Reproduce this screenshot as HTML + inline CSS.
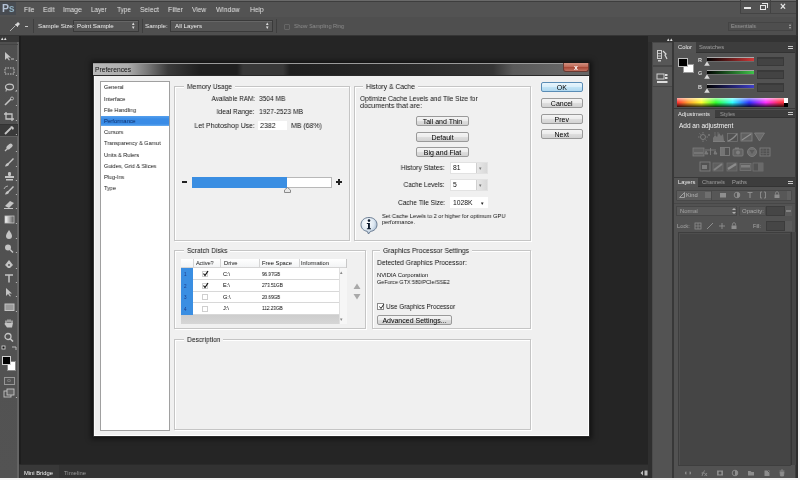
<!DOCTYPE html>
<html><head><meta charset="utf-8">
<style>
*{box-sizing:border-box}
html,body{margin:0;padding:0}
body{width:800px;height:480px;overflow:hidden;position:relative;background:#262626;font-family:"Liberation Sans",sans-serif}
.a{position:absolute}
.t{position:absolute;white-space:nowrap;line-height:1;will-change:transform}
.dk{-webkit-text-stroke:0.15px currentColor}
.mn{color:#dedede;font-size:7px;top:6px}
.dl{color:#1a1a1a;font-size:6.7px}
.grp{position:absolute;border:1px solid #d0d0d0;box-shadow:inset 1px 1px 0 #fff,1px 1px 0 #fff}
.gt{position:absolute;background:#f0f0f0;padding:0 2px;white-space:nowrap;line-height:1;font-size:6.7px;color:#1a1a1a}
.btn{position:absolute;border:1px solid #9a9a9a;border-radius:2px;background:linear-gradient(#f4f4f4,#ececec 50%,#dedede 51%,#d2d2d2);font-size:7px;color:#000;text-align:center;line-height:9px;will-change:transform;white-space:nowrap}
</style></head><body>

<!-- ===== MENU BAR ===== -->
<div class="a" style="left:0;top:0;width:798px;height:17px;background:#535353"></div>
<div class="a" style="left:0;top:0;width:798px;height:1px;background:#6a6a6a"></div>
<div class="a" style="left:0;top:1px;width:798px;height:1px;background:#3e3e3e"></div>
<div class="a" style="left:0;top:2px;width:16px;height:13px;background:#474b51"></div>
<div class="t" style="left:1.5px;top:2.6px;font-size:10.5px;font-weight:bold;color:#b4c2d6;letter-spacing:-0.3px">P<span style="color:#8fb0c2">s</span></div>
<!-- window controls -->
<div class="a" style="left:740px;top:0;width:1px;height:14px;background:#424242"></div>
<div class="a" style="left:770px;top:0;width:1px;height:14px;background:#424242"></div>
<div class="a" style="left:740px;top:13px;width:56px;height:1px;background:#444"></div>
<div class="a" style="left:744px;top:7px;width:7px;height:1.5px;background:#e8e8e8"></div>
<div class="a" style="left:760px;top:5px;width:6px;height:5px;border:1px solid #e8e8e8"></div>
<div class="a" style="left:762px;top:3px;width:6px;height:5px;border:1px solid #e8e8e8;border-left:0;border-bottom:0"></div>
<div class="t" style="left:780px;top:2px;font-size:10px;color:#e8e8e8;font-weight:bold">×</div>

<!-- ===== OPTIONS BAR ===== -->
<div class="a" style="left:0;top:17px;width:798px;height:18px;background:#4f4f4f"></div>
<div class="a" style="left:0;top:35px;width:798px;height:1px;background:#353535"></div>
<div class="a" style="left:25px;top:26px;width:3px;height:1px;background:#c8c8c8"></div>
<div class="a" style="left:33px;top:19px;width:1px;height:14px;background:#3f3f3f"></div>
<div class="a" style="left:73px;top:20px;width:66px;height:12px;background:#555;border:1px solid #3a3a3a;box-shadow:inset 0 1px 0 #666"></div>
<div class="t" style="left:132px;top:21px;font-size:5px;color:#ddd;line-height:4px">▴<br>▾</div>
<div class="a" style="left:142px;top:19px;width:1px;height:14px;background:#3f3f3f"></div>
<div class="a" style="left:170px;top:20px;width:103px;height:12px;background:#555;border:1px solid #3a3a3a;box-shadow:inset 0 1px 0 #666"></div>
<div class="t" style="left:266px;top:21px;font-size:5px;color:#ddd;line-height:4px">▴<br>▾</div>
<div class="a" style="left:276px;top:19px;width:1px;height:14px;background:#3f3f3f"></div>
<div class="a" style="left:284px;top:24px;width:6px;height:6px;border:1px solid #666;border-radius:1px"></div>
<div class="a" style="left:728px;top:21.5px;width:65px;height:9px;background:#4e4e4e;border:1px solid #444"></div>
<div class="t" style="left:789px;top:23px;font-size:4px;color:#aaa;line-height:3px">▴<br>▾</div>

<!-- ===== LEFT TOOLBAR ===== -->
<div class="a" style="left:0;top:36px;width:20px;height:6px;background:#383838"></div>
<div class="t" style="left:1px;top:36px;font-size:5px;color:#ddd">▴▴</div>
<div class="a" style="left:0;top:42px;width:19px;height:436px;background:linear-gradient(#4f4f4f,#535353)"></div>
<div class="a" style="left:17px;top:42px;width:2px;height:436px;background:#646464"></div>
<div class="a" style="left:19px;top:36px;width:2px;height:442px;background:#1e1e1e"></div>

<!-- ===== DOCUMENT AREA ===== -->
<div class="a" style="left:21px;top:36px;width:627px;height:428px;background:#252525"></div>

<!-- ===== MINI BRIDGE BAR ===== -->
<div class="a" style="left:19px;top:464px;width:629px;height:14px;background:#323232;border-top:1px solid #2a2a2a"></div>
<svg class="a" style="left:640px;top:470px" width="8" height="6" viewBox="0 0 8 6"><path d="M0.5 3 L3 0.5 V5.5Z M4.5 0.5 H7.5 V5.5 H4.5Z" fill="#bdbdbd"/></svg>
<div class="a" style="left:20px;top:465px;width:39px;height:13px;background:#383838"></div>

<!-- ===== RIGHT ICON STRIP ===== -->
<div class="a" style="left:651px;top:36px;width:147px;height:442px;background:#3b3b3b"></div>
<div class="t" style="left:666px;top:36px;font-size:5px;color:#ddd">▴▴</div>
<div class="a" style="left:652px;top:42px;width:21px;height:436px;background:#535353;border:1px solid #3a3a3a"></div>

<!-- ===== RIGHT PANELS ===== -->
<div class="a" style="left:674px;top:42px;width:123px;height:436px;background:#535353"></div>
<div class="a" style="left:796px;top:0;width:2px;height:478px;background:#333"></div>
<div class="a" style="left:798px;top:0;width:2px;height:480px;background:#f4f4f4"></div>
<div class="a" style="left:0;top:478px;width:800px;height:2px;background:#f4f4f4"></div>

<!-- DIALOG -->
<div class="a" style="left:93px;top:63px;width:497px;height:374px;background:#f0f0f0;box-shadow:0 0 5px 2px rgba(0,0,0,.55)"></div>
<div class="a" style="left:93px;top:63px;width:497px;height:13px;background:linear-gradient(90deg,#b8b8b8 0px,#adadad 35px,#777 55px,#3a3a3a 75px,#1f1f1f 107px,#1f1f1f 144px,#383838 150px,#383838 190px,#1f1f1f 197px,#212121 227px,#2a2a2a 327px,#353535 400px,#5a5a5a 420px,#666 470px)"></div>
<div class="a" style="left:93px;top:63px;width:497px;height:1px;background:#9a9a9a"></div>
<div class="a" style="left:93px;top:75px;width:497px;height:1px;background:#2a2a2a"></div>
<div class="t" style="left:95px;top:67px;font-size:6.7px;color:#111;">Preferences</div>
<div class="a" style="left:563px;top:63px;width:26px;height:9px;background:linear-gradient(#d09080,#c06a58 45%,#a84a38 55%,#c07060);border:1px solid #6a3a32;border-top:0;border-radius:0 0 3px 3px"></div>
<div class="t" style="left:476px;width:200px;text-align:center;top:64px;font-size:7px;color:#fff;font-weight:bold">x</div>
<div class="a" style="left:93px;top:76px;width:1px;height:361px;background:#3a3a3a"></div>
<div class="a" style="left:94px;top:76px;width:1px;height:360px;background:#fafafa"></div>
<div class="a" style="left:589px;top:63px;width:1px;height:374px;background:#2a2a2a"></div>
<div class="a" style="left:588px;top:76px;width:1px;height:360px;background:#ffffff"></div>
<div class="a" style="left:93px;top:436px;width:497px;height:1px;background:#2a2a2a"></div>
<div class="a" style="left:94px;top:435px;width:495px;height:1px;background:#ffffff"></div>
<div class="a" style="left:100px;top:81px;width:70px;height:350px;background:#fff;border:1px solid #a0a0a0"></div>
<div class="a" style="left:101px;top:115.5px;width:68px;height:10px;background:linear-gradient(#55a0ee,#3a8ce6 30%,#3a8ce6 80%,#6aaef0)"></div>
<div class="t" style="left:104px;top:84px;font-size:6.0px;color:#111;transform:scaleX(0.917);transform-origin:left center;">General</div>
<div class="t" style="left:104px;top:96px;font-size:6.0px;color:#111;transform:scaleX(0.916);transform-origin:left center;">Interface</div>
<div class="t" style="left:104px;top:107px;font-size:6.0px;color:#111;transform:scaleX(0.917);transform-origin:left center;">File Handling</div>
<div class="t" style="left:104px;top:118px;font-size:6.0px;color:#0b2a66;transform:scaleX(0.917);transform-origin:left center;">Performance</div>
<div class="t" style="left:104px;top:129px;font-size:6.0px;color:#111;transform:scaleX(0.917);transform-origin:left center;">Cursors</div>
<div class="t" style="left:104px;top:140px;font-size:6.0px;color:#111;transform:scaleX(0.917);transform-origin:left center;">Transparency &amp; Gamut</div>
<div class="t" style="left:104px;top:152px;font-size:6.0px;color:#111;transform:scaleX(0.917);transform-origin:left center;">Units &amp; Rulers</div>
<div class="t" style="left:104px;top:163px;font-size:6.0px;color:#111;transform:scaleX(0.917);transform-origin:left center;">Guides, Grid &amp; Slices</div>
<div class="t" style="left:104px;top:174px;font-size:6.0px;color:#111;transform:scaleX(0.917);transform-origin:left center;">Plug-Ins</div>
<div class="t" style="left:104px;top:185px;font-size:6.0px;color:#111;transform:scaleX(0.917);transform-origin:left center;">Type</div>
<div class="a" style="left:174px;top:86px;width:176px;height:155px;border:1px solid #c5c5c5;box-shadow:inset 1px 1px 0 #fff, 1px 1px 0 #fff"></div>
<div class="a" style="left:183.5px;top:82px;width:51px;height:8px;background:#f0f0f0"></div>
<div class="t" style="left:186.5px;top:83px;font-size:7.5px;color:#111;transform:scaleX(0.885);transform-origin:left center;">Memory Usage</div>
<div class="a" style="left:354px;top:86px;width:177px;height:155px;border:1px solid #c5c5c5;box-shadow:inset 1px 1px 0 #fff, 1px 1px 0 #fff"></div>
<div class="a" style="left:363px;top:82px;width:55px;height:8px;background:#f0f0f0"></div>
<div class="t" style="left:366px;top:83px;font-size:7.5px;color:#111;transform:scaleX(0.904);transform-origin:left center;">History &amp; Cache</div>
<div class="a" style="left:174px;top:250px;width:192px;height:79px;border:1px solid #c5c5c5;box-shadow:inset 1px 1px 0 #fff, 1px 1px 0 #fff"></div>
<div class="a" style="left:183.5px;top:246px;width:46.5px;height:8px;background:#f0f0f0"></div>
<div class="t" style="left:186.5px;top:247px;font-size:7.5px;color:#111;transform:scaleX(0.883);transform-origin:left center;">Scratch Disks</div>
<div class="a" style="left:372px;top:250px;width:159px;height:79px;border:1px solid #c5c5c5;box-shadow:inset 1px 1px 0 #fff, 1px 1px 0 #fff"></div>
<div class="a" style="left:380px;top:246px;width:92px;height:8px;background:#f0f0f0"></div>
<div class="t" style="left:383px;top:247px;font-size:7.5px;color:#111;transform:scaleX(0.905);transform-origin:left center;">Graphics Processor Settings</div>
<div class="a" style="left:174px;top:339px;width:357px;height:91px;border:1px solid #c5c5c5;box-shadow:inset 1px 1px 0 #fff, 1px 1px 0 #fff"></div>
<div class="a" style="left:183.5px;top:335px;width:39.5px;height:8px;background:#f0f0f0"></div>
<div class="t" style="left:186.5px;top:336px;font-size:7.5px;color:#111;transform:scaleX(0.893);transform-origin:left center;">Description</div>
<div class="t" style="right:545.2px;top:95px;font-size:7.5px;color:#111;transform:scaleX(0.851);transform-origin:right center;">Available RAM:</div>
<div class="t" style="left:259px;top:95px;font-size:7.5px;color:#111;transform:scaleX(0.879);transform-origin:left center;">3504 MB</div>
<div class="t" style="right:545.2px;top:108px;font-size:7.5px;color:#111;transform:scaleX(0.891);transform-origin:right center;">Ideal Range:</div>
<div class="t" style="left:259px;top:108px;font-size:7.5px;color:#111;transform:scaleX(0.894);transform-origin:left center;">1927-2523 MB</div>
<div class="t" style="right:545.6px;top:122px;font-size:7.5px;color:#111;transform:scaleX(0.917);transform-origin:right center;">Let Photoshop Use:</div>
<div class="a" style="left:258px;top:121px;width:29px;height:9px;background:#fff"></div>
<div class="t" style="left:259.7px;top:122px;font-size:7.5px;color:#111;transform:scaleX(0.941);transform-origin:left center;">2382</div>
<div class="t" style="left:291.2px;top:122px;font-size:7.5px;color:#111;transform:scaleX(0.924);transform-origin:left center;">MB (68%)</div>
<div class="a" style="left:192px;top:177px;width:140px;height:11px;background:#fff;border:1px solid #b8b8b8"></div>
<div class="a" style="left:192px;top:177px;width:95px;height:11px;background:#3a8ee2"></div>
<div class="a" style="left:181.5px;top:181.3px;width:5px;height:1.4px;background:#222"></div>
<div class="a" style="left:336px;top:181.3px;width:6px;height:1.3px;background:#222"></div>
<div class="a" style="left:338.35px;top:179px;width:1.3px;height:6px;background:#222"></div>
<svg class="a" style="left:284px;top:187px" width="7" height="6" viewBox="0 0 7 6"><path d="M3.5 0.5 L6.5 3 L6.5 5.5 L0.5 5.5 L0.5 3Z" fill="#e8e8e8" stroke="#8a8a8a" stroke-width="1"/></svg>
<div class="t" style="left:360px;top:95px;font-size:7.5px;color:#111;transform:scaleX(0.885);transform-origin:left center;">Optimize Cache Levels and Tile Size for</div>
<div class="t" style="left:360px;top:102px;font-size:7.5px;color:#111;transform:scaleX(0.935);transform-origin:left center;">documents that are:</div>
<div class="btn" style="left:416px;top:116px;width:53px;height:10px;">Tall and Thin</div>
<div class="btn" style="left:416px;top:131.7px;width:53px;height:10px;">Default</div>
<div class="btn" style="left:416px;top:147.4px;width:53px;height:10px;">Big and Flat</div>
<div class="t" style="right:355px;top:164px;font-size:7.5px;color:#111;transform:scaleX(0.902);transform-origin:right center;">History States:</div>
<div class="t" style="right:355px;top:181px;font-size:7.5px;color:#111;transform:scaleX(0.863);transform-origin:right center;">Cache Levels:</div>
<div class="t" style="right:355px;top:199px;font-size:7.5px;color:#111;transform:scaleX(0.871);transform-origin:right center;">Cache Tile Size:</div>
<div class="a" style="left:449.5px;top:161.5px;width:38px;height:12.5px;background:#fff;border:1px solid #e2e2e2"></div>
<div class="a" style="left:475.5px;top:162.5px;width:11px;height:10.5px;background:linear-gradient(90deg,#e8e8e8,#d8d8d8);border-left:1px solid #d0d0d0"></div>
<div class="t" style="left:478.5px;top:167px;font-size:4.5px;color:#777;">&#9662;</div>
<div class="t" style="left:453px;top:165px;font-size:6.8px;color:#111;">81</div>
<div class="a" style="left:449.5px;top:178.5px;width:38px;height:12.5px;background:#fff;border:1px solid #e2e2e2"></div>
<div class="a" style="left:475.5px;top:179.5px;width:11px;height:10.5px;background:linear-gradient(90deg,#e8e8e8,#d8d8d8);border-left:1px solid #d0d0d0"></div>
<div class="t" style="left:478.5px;top:184px;font-size:4.5px;color:#777;">&#9662;</div>
<div class="t" style="left:453px;top:182px;font-size:6.8px;color:#111;">5</div>
<div class="a" style="left:449.5px;top:196.7px;width:38px;height:11.5px;background:#fff"></div>
<div class="t" style="left:453px;top:200px;font-size:6.8px;color:#111;">1028K</div>
<div class="t" style="left:480px;top:202px;font-size:4.5px;color:#222;">&#9660;</div>
<svg class="a" style="left:359px;top:215.5px" width="20" height="19" viewBox="0 0 20 19"><defs><radialGradient id="ig" cx="0.4" cy="0.35" r="0.75"><stop offset="0" stop-color="#ffffff"/><stop offset="0.55" stop-color="#dde8f2"/><stop offset="1" stop-color="#8ea6c0"/></radialGradient></defs><path d="M10 1.5 C14.8 1.5 18 4.6 18 8.6 C18 12.4 15.2 15 11.5 15.4 L9.5 18 L8.2 15.3 C4.5 14.8 2 12.2 2 8.6 C2 4.6 5.2 1.5 10 1.5Z" fill="url(#ig)" stroke="#5d7088" stroke-width="0.9"/><circle cx="10" cy="4.6" r="1.3" fill="#0d1a2e"/><path d="M7.8 7 H10.9 V12.3 H12 V13.3 H7.9 V12.3 H9 V8 H7.8Z" fill="#0d1a2e"/></svg>
<div class="t" style="left:381.6px;top:214px;font-size:5.8px;color:#111;transform:scaleX(0.966);transform-origin:left center;">Set Cache Levels to 2 or higher for optimum GPU</div>
<div class="t" style="left:381.6px;top:220px;font-size:5.6px;color:#111;">performance.</div>
<div class="a" style="left:180.5px;top:258.5px;width:166px;height:65.5px;background:#fff;border:1px solid #c8c8c8"></div>
<div class="a" style="left:181px;top:259px;width:165px;height:9px;background:linear-gradient(#ffffff,#f3f4f5);border-bottom:1px solid #d5d5d5"></div>
<div class="a" style="left:181px;top:268px;width:11.5px;height:46.5px;background:#3a8ee2"></div>
<div class="a" style="left:192.5px;top:259px;width:1px;height:9px;background:#d5d5d5"></div>
<div class="a" style="left:220px;top:259px;width:1px;height:9px;background:#d5d5d5"></div>
<div class="a" style="left:259px;top:259px;width:1px;height:9px;background:#d5d5d5"></div>
<div class="a" style="left:298.6px;top:259px;width:1px;height:9px;background:#d5d5d5"></div>
<div class="t" style="left:195.5px;top:261px;font-size:5.8px;color:#111;transform:scaleX(0.920);transform-origin:left center;">Active?</div>
<div class="t" style="left:224px;top:261px;font-size:5.8px;color:#111;">Drive</div>
<div class="t" style="left:262px;top:261px;font-size:5.8px;color:#111;">Free Space</div>
<div class="t" style="left:301px;top:261px;font-size:5.8px;color:#111;transform:scaleX(0.955);transform-origin:left center;">Information</div>
<div class="a" style="left:192.5px;top:279.1px;width:146px;height:1px;background:#d8d8d8"></div>
<div class="t" style="left:184px;top:273px;font-size:4.6px;color:#1a3a8a;">1</div>
<div class="a" style="left:202px;top:271.0px;width:6px;height:6px;border:1px solid #cfcfcf;background:#fff"></div>
<svg class="a" style="left:202px;top:270.0px" width="7" height="7" viewBox="0 0 7 7"><path d="M1.5 3.5 L3 5.5 L6 1" stroke="#111" stroke-width="1.2" fill="none"/></svg>
<div class="t" style="left:222.5px;top:272px;font-size:5.6px;color:#000;">C:\</div>
<div class="t" style="left:261.5px;top:272px;font-size:5.6px;color:#000;transform:scaleX(0.824);transform-origin:left center;">96.97GB</div>
<div class="a" style="left:192.5px;top:290.70000000000005px;width:146px;height:1px;background:#d8d8d8"></div>
<div class="t" style="left:184px;top:285px;font-size:4.6px;color:#1a3a8a;">2</div>
<div class="a" style="left:202px;top:282.6px;width:6px;height:6px;border:1px solid #cfcfcf;background:#fff"></div>
<svg class="a" style="left:202px;top:281.6px" width="7" height="7" viewBox="0 0 7 7"><path d="M1.5 3.5 L3 5.5 L6 1" stroke="#111" stroke-width="1.2" fill="none"/></svg>
<div class="t" style="left:222.5px;top:283px;font-size:5.6px;color:#000;">E:\</div>
<div class="t" style="left:261.5px;top:283px;font-size:5.6px;color:#000;transform:scaleX(0.825);transform-origin:left center;">273.51GB</div>
<div class="a" style="left:192.5px;top:302.3px;width:146px;height:1px;background:#d8d8d8"></div>
<div class="t" style="left:184px;top:296px;font-size:4.6px;color:#1a3a8a;">3</div>
<div class="a" style="left:202px;top:294.2px;width:6px;height:6px;border:1px solid #cfcfcf;background:#fff"></div>
<div class="t" style="left:222.5px;top:295px;font-size:5.6px;color:#000;">G:\</div>
<div class="t" style="left:261.5px;top:295px;font-size:5.6px;color:#000;transform:scaleX(0.824);transform-origin:left center;">20.69GB</div>
<div class="a" style="left:192.5px;top:313.90000000000003px;width:146px;height:1px;background:#d8d8d8"></div>
<div class="t" style="left:184px;top:308px;font-size:4.6px;color:#1a3a8a;">4</div>
<div class="a" style="left:202px;top:305.8px;width:6px;height:6px;border:1px solid #cfcfcf;background:#fff"></div>
<div class="t" style="left:222.5px;top:306px;font-size:5.6px;color:#000;">J:\</div>
<div class="t" style="left:261.5px;top:306px;font-size:5.6px;color:#000;transform:scaleX(0.839);transform-origin:left center;">112.23GB</div>
<div class="a" style="left:181px;top:314.5px;width:157.5px;height:9px;background:linear-gradient(#cdcdcd,#d6d6d6)"></div>
<div class="a" style="left:338.5px;top:268px;width:8px;height:56px;background:#f6f6f6;border-left:1px solid #e0e0e0"></div>
<div class="t" style="left:340px;top:271px;font-size:4.5px;color:#888;">&#9652;</div>
<div class="t" style="left:340px;top:318px;font-size:4.5px;color:#888;">&#9662;</div>
<svg class="a" style="left:353px;top:283px" width="8" height="18" viewBox="0 0 8 18"><path d="M4 0.5 L7.5 6 H0.5Z M0.5 11 H7.5 L4 16.5Z" fill="#a9a9a9"/></svg>
<div class="t" style="left:376.7px;top:259px;font-size:7.5px;color:#111;transform:scaleX(0.897);transform-origin:left center;">Detected Graphics Processor:</div>
<div class="t" style="left:376.7px;top:273px;font-size:5.8px;color:#111;transform:scaleX(1.007);transform-origin:left center;">NVIDIA Corporation</div>
<div class="t" style="left:376.7px;top:280px;font-size:5.6px;color:#111;transform:scaleX(0.963);transform-origin:left center;">GeForce GTX 580/PCIe/SSE2</div>
<div class="a" style="left:377.4px;top:303px;width:6.5px;height:6.5px;border:1px solid #8a8a8a;background:#fff"></div>
<svg class="a" style="left:377.5px;top:302.5px" width="7" height="7" viewBox="0 0 7 7"><path d="M1.5 3.5 L3 5.5 L5.8 1.2" stroke="#222" stroke-width="1" fill="none"/></svg>
<div class="t" style="left:385.7px;top:303px;font-size:7.5px;color:#111;transform:scaleX(0.853);transform-origin:left center;">Use Graphics Processor</div>
<div class="btn" style="left:377.4px;top:315px;width:75px;height:10px;">Advanced Settings...</div>
<div class="btn" style="left:541px;top:82.3px;width:41.5px;height:9.5px;border-color:#5a8cb5;background:linear-gradient(#e8f5fc,#d8eefa 50%,#c2e4f6 51%,#b0d8f0);">OK</div>
<div class="btn" style="left:541px;top:98.3px;width:41.5px;height:9.5px;">Cancel</div>
<div class="btn" style="left:541px;top:113.6px;width:41.5px;height:9.5px;">Prev</div>
<div class="btn" style="left:541px;top:129.2px;width:41.5px;height:9.5px;">Next</div>
<!-- RIGHT PANELS -->
<div class="a" style="left:648px;top:36px;width:150px;height:442px;background:#3e3e3e"></div>
<div class="a" style="left:648px;top:42px;width:4px;height:436px;background:#2f2f2f"></div>
<div class="a" style="left:648px;top:36px;width:150px;height:6px;background:#333"></div>
<div class="t" style="left:666.5px;top:38px;font-size:4.6px;color:#e0e0e0;letter-spacing:-0.5px">&#9652;&#9652;</div>
<div class="a" style="left:652px;top:42px;width:21px;height:436px;background:#535353;border-left:1px solid #4a4a4a"></div>
<div class="a" style="left:652px;top:42px;width:21px;height:24px;background:#575757;border:1px solid #474747"></div>
<div class="a" style="left:652px;top:66px;width:21px;height:21px;background:#575757;border:1px solid #474747"></div>
<svg class="a" style="left:656px;top:49px" width="13" height="13" viewBox="0 0 13 13"><rect x="1.5" y="1.5" width="4" height="8" fill="none" stroke="#cfcfcf" stroke-width="1"/><path d="M1.5 4.5h4M1.5 7h4" stroke="#cfcfcf" stroke-width="0.8"/><path d="M7 2 L10 5 L9 6 L11 10" stroke="#d8d8d8" stroke-width="1.2" fill="none"/><rect x="2" y="11" width="3" height="1.5" fill="#ccc"/></svg>
<svg class="a" style="left:656px;top:72px" width="13" height="12" viewBox="0 0 13 12"><rect x="1" y="2" width="7" height="5" fill="none" stroke="#cfcfcf" stroke-width="1"/><rect x="9" y="2" width="2.5" height="2" fill="#ddd"/><rect x="9" y="5" width="2.5" height="2" fill="#ddd"/><rect x="1" y="9" width="10.5" height="2" fill="#ddd"/></svg>
<div class="a" style="left:672px;top:42px;width:125px;height:436px;background:#525252;border-left:2px solid #383838"></div>
<div class="a" style="left:795px;top:42px;width:1px;height:436px;background:#3c3c3c"></div>
<div class="a" style="left:796px;top:36px;width:2px;height:442px;background:#2e2e2e"></div>
<div class="a" style="left:674px;top:42px;width:121px;height:10.5px;background:#3d3d3d;border-bottom:1px solid #333"></div>
<div class="a" style="left:674px;top:42px;width:22px;height:10.5px;background:#535353"></div>
<div class="t" style="left:678px;top:45px;font-size:5.8px;color:#eeeeee;font-weight:boldtransform:scaleX(0.958);transform-origin:left center;">Color</div>
<div class="t" style="left:699px;top:45px;font-size:5.8px;color:#a0a0a0;transform:scaleX(0.994);transform-origin:left center;">Swatches</div>
<div class="a" style="left:788px;top:45.75px;width:5px;height:1px;background:#c8c8c8"></div>
<div class="a" style="left:788px;top:47.75px;width:5px;height:1px;background:#c8c8c8"></div>
<div class="a" style="left:677.5px;top:58px;width:10px;height:8.5px;background:#000;border:1px solid #bdbdbd"></div>
<div class="a" style="left:683px;top:63.5px;width:10.5px;height:9.5px;background:#fff;border:1px solid #9a9a9a"></div>
<div class="a" style="left:677.5px;top:58px;width:10px;height:8.5px;background:#000;border:1px solid #bdbdbd"></div>
<div class="t" style="left:698px;top:58px;font-size:5.5px;color:#d8d8d8;font-weight:bold">R</div>
<div class="a" style="left:706.5px;top:57px;width:47px;height:4px;background:linear-gradient(90deg,#000,#d03838);border-top:1px solid #a9a9a9;box-shadow:0 1px 0 #6a6a6a"></div>
<svg class="a" style="left:703.5px;top:61px" width="6" height="5" viewBox="0 0 6 5"><path d="M3 0.3 L5.8 4.7 L0.2 4.7Z" fill="#d8d8d8"/></svg>
<div class="a" style="left:757px;top:56.5px;width:26.5px;height:9px;background:#434343;border:1px solid #393939;box-shadow:inset 0 1px 0 #3a3a3a"></div>
<div class="t" style="left:698px;top:71px;font-size:5.5px;color:#d8d8d8;font-weight:bold">G</div>
<div class="a" style="left:706.5px;top:70px;width:47px;height:4px;background:linear-gradient(90deg,#000,#3fc44a);border-top:1px solid #a9a9a9;box-shadow:0 1px 0 #6a6a6a"></div>
<svg class="a" style="left:703.5px;top:74px" width="6" height="5" viewBox="0 0 6 5"><path d="M3 0.3 L5.8 4.7 L0.2 4.7Z" fill="#d8d8d8"/></svg>
<div class="a" style="left:757px;top:69.5px;width:26.5px;height:9px;background:#434343;border:1px solid #393939;box-shadow:inset 0 1px 0 #3a3a3a"></div>
<div class="t" style="left:698px;top:85px;font-size:5.5px;color:#d8d8d8;font-weight:bold">B</div>
<div class="a" style="left:706.5px;top:83.5px;width:47px;height:4px;background:linear-gradient(90deg,#000,#3e3ec8);border-top:1px solid #a9a9a9;box-shadow:0 1px 0 #6a6a6a"></div>
<svg class="a" style="left:703.5px;top:87.5px" width="6" height="5" viewBox="0 0 6 5"><path d="M3 0.3 L5.8 4.7 L0.2 4.7Z" fill="#d8d8d8"/></svg>
<div class="a" style="left:757px;top:83.0px;width:26.5px;height:9px;background:#434343;border:1px solid #393939;box-shadow:inset 0 1px 0 #3a3a3a"></div>
<div class="a" style="left:677px;top:98px;width:111px;height:9px;background:linear-gradient(90deg,#ff3030 0%,#ffa030 10%,#ffff30 22%,#30ff30 35%,#30ffff 50%,#3030ff 65%,#ff30ff 80%,#ff3050 92%,#ff3030 100%)"></div>
<div class="a" style="left:677px;top:98px;width:111px;height:9px;background:linear-gradient(rgba(255,255,255,.6),rgba(255,255,255,.15) 35%,rgba(0,0,0,0) 50%,rgba(0,0,0,.8))"></div>
<div class="a" style="left:783.5px;top:98px;width:4.5px;height:4.5px;background:#fff"></div>
<div class="a" style="left:783.5px;top:102.5px;width:4.5px;height:4.5px;background:#000"></div>
<div class="a" style="left:674px;top:107.5px;width:121px;height:1px;background:#3a3a3a"></div>
<div class="a" style="left:674px;top:109.5px;width:121px;height:8.5px;background:#3d3d3d;border-bottom:1px solid #333"></div>
<div class="a" style="left:674px;top:109.5px;width:41px;height:8.5px;background:#535353"></div>
<div class="t" style="left:678px;top:112px;font-size:5.8px;color:#eeeeee;font-weight:boldtransform:scaleX(0.911);transform-origin:left center;">Adjustments</div>
<div class="t" style="left:720px;top:112px;font-size:5.8px;color:#a0a0a0;transform:scaleX(0.950);transform-origin:left center;">Styles</div>
<div class="a" style="left:788px;top:112.25px;width:5px;height:1px;background:#c8c8c8"></div>
<div class="a" style="left:788px;top:114.25px;width:5px;height:1px;background:#c8c8c8"></div>
<div class="t" style="left:679px;top:123px;font-size:6.5px;color:#f4f4f4;font-weight:boldtransform:scaleX(0.889);transform-origin:left center;">Add an adjustment</div>
<svg class="a" style="left:697px;top:131px;opacity:.62" width="14" height="11" viewBox="0 0 14 11"><circle cx="6" cy="6" r="2.5" fill="none" stroke="#9a9a9a" stroke-width="1"/><path d="M6 1V2.5M6 9.5V11M1 6H2.5M9.5 6H11M2.5 2.5L3.5 3.5M8.5 8.5L9.5 9.5" stroke="#9a9a9a" stroke-width="0.9"/><path d="M11 4h2" stroke="#b0b0b0" stroke-width="1"/></svg>
<svg class="a" style="left:712px;top:131px;opacity:.62" width="14" height="11" viewBox="0 0 14 11"><path d="M1 10V7L3 4L5 6L7 2L9 5L11 3L12 10Z" fill="#8a8a8a"/><path d="M1 10.5H13" stroke="#9a9a9a"/><path d="M3 1V4M6 1V5" stroke="#888" stroke-width="0.8"/></svg>
<svg class="a" style="left:726px;top:132px;opacity:.62" width="14" height="11" viewBox="0 0 14 11"><rect x="1.5" y="1.5" width="10" height="8" fill="none" stroke="#888" stroke-width="0.8"/><path d="M2 9 Q6 8 11 2" stroke="#b0b0b0" stroke-width="1.2" fill="none"/></svg>
<svg class="a" style="left:740px;top:131px;opacity:.62" width="14" height="11" viewBox="0 0 14 11"><rect x="1" y="2" width="11" height="8" fill="#6a6a6a" stroke="#9a9a9a" stroke-width="0.9"/><path d="M2 9L11 3" stroke="#b8b8b8" stroke-width="1.2"/></svg>
<svg class="a" style="left:753px;top:131px;opacity:.62" width="14" height="11" viewBox="0 0 14 11"><path d="M1.5 2H11.5L6.5 10Z" fill="#7a7a7a" stroke="#9a9a9a" stroke-width="0.9"/></svg>
<svg class="a" style="left:692px;top:146px;opacity:.62" width="14" height="11" viewBox="0 0 14 11"><rect x="1" y="2" width="11" height="8" fill="#6e6e6e" stroke="#9a9a9a" stroke-width="0.8"/><path d="M2 7H11" stroke="#aaa"/></svg>
<svg class="a" style="left:704px;top:146px;opacity:.62" width="14" height="11" viewBox="0 0 14 11"><path d="M1 4H12M6.5 2V9M2 5L1 8H4ZM11 5L10 8H13Z" stroke="#9a9a9a" fill="#8a8a8a" stroke-width="0.9"/></svg>
<svg class="a" style="left:719px;top:146px;opacity:.62" width="14" height="11" viewBox="0 0 14 11"><rect x="1.5" y="1.5" width="9" height="8" fill="none" stroke="#9a9a9a" stroke-width="0.9"/><rect x="2" y="2" width="4" height="7" fill="#8a8a8a"/></svg>
<svg class="a" style="left:732px;top:146px;opacity:.62" width="14" height="11" viewBox="0 0 14 11"><rect x="1" y="3" width="10" height="7" rx="1" fill="#6e6e6e" stroke="#9a9a9a" stroke-width="0.9"/><circle cx="6" cy="6.5" r="2" fill="#9a9a9a"/><rect x="3" y="1.5" width="4" height="1.5" fill="#9a9a9a"/></svg>
<svg class="a" style="left:746px;top:146px;opacity:.62" width="14" height="11" viewBox="0 0 14 11"><circle cx="6" cy="6" r="4.5" fill="#7e7e7e" stroke="#9a9a9a" stroke-width="0.9"/><path d="M3.5 4H8.5L6 8Z" fill="#5e5e5e"/></svg>
<svg class="a" style="left:759px;top:146px;opacity:.62" width="14" height="11" viewBox="0 0 14 11"><rect x="1" y="2" width="10" height="8" fill="none" stroke="#9a9a9a" stroke-width="0.9"/><path d="M1 5H11M1 7.5H11M4 2V10M7.5 2V10" stroke="#7a7a7a" stroke-width="0.7"/></svg>
<svg class="a" style="left:699px;top:161px;opacity:.62" width="14" height="11" viewBox="0 0 14 11"><rect x="1" y="1" width="10" height="9" fill="none" stroke="#9a9a9a" stroke-width="0.9"/><rect x="3" y="4" width="5" height="4" fill="#9a9a9a"/></svg>
<svg class="a" style="left:712px;top:161px;opacity:.62" width="14" height="11" viewBox="0 0 14 11"><rect x="1" y="2" width="10" height="8" fill="#666" stroke="#808080" stroke-width="0.8"/><path d="M2 9L10 3" stroke="#a0a0a0" stroke-width="2"/></svg>
<svg class="a" style="left:726px;top:161px;opacity:.62" width="14" height="11" viewBox="0 0 14 11"><rect x="1" y="2" width="10" height="8" fill="#666" stroke="#808080" stroke-width="0.8"/><path d="M2 8L10 3" stroke="#b0b0b0" stroke-width="2.2"/></svg>
<svg class="a" style="left:739px;top:161px;opacity:.62" width="14" height="11" viewBox="0 0 14 11"><rect x="1" y="2.5" width="11" height="7" fill="#6a6a6a" stroke="#8a8a8a" stroke-width="0.8"/><rect x="2" y="4" width="9" height="2.5" fill="#9a9a9a"/></svg>
<svg class="a" style="left:752px;top:161px;opacity:.62" width="14" height="11" viewBox="0 0 14 11"><rect x="1" y="2" width="10" height="8" fill="none" stroke="#8a8a8a" stroke-width="0.8"/><rect x="6" y="2" width="5" height="8" fill="#7a7a7a"/></svg>
<div class="a" style="left:674px;top:176.5px;width:121px;height:1px;background:#3a3a3a"></div>
<div class="a" style="left:674px;top:177.5px;width:121px;height:9px;background:#3d3d3d;border-bottom:1px solid #333"></div>
<div class="a" style="left:674px;top:177.5px;width:24px;height:9px;background:#535353"></div>
<div class="t" style="left:678px;top:180px;font-size:5.8px;color:#eeeeee;font-weight:boldtransform:scaleX(0.855);transform-origin:left center;">Layers</div>
<div class="t" style="left:702px;top:180px;font-size:5.8px;color:#a0a0a0;transform:scaleX(0.939);transform-origin:left center;">Channels</div>
<div class="t" style="left:732px;top:180px;font-size:5.8px;color:#a0a0a0;transform:scaleX(1.012);transform-origin:left center;">Paths</div>
<div class="a" style="left:788px;top:180.5px;width:5px;height:1px;background:#c8c8c8"></div>
<div class="a" style="left:788px;top:182.5px;width:5px;height:1px;background:#c8c8c8"></div>
<div class="a" style="left:676px;top:189.5px;width:116px;height:11px;background:#575757;border:1px solid #484848;border-radius:1px"></div>
<div class="a" style="left:677px;top:190.5px;width:35px;height:9px;background:#5c5c5c;border-right:1px solid #4a4a4a"></div>
<svg class="a" style="left:679px;top:192px" width="6" height="6" viewBox="0 0 6 6"><path d="M0.5 5.5 L5.5 0.5 V5.5Z" fill="none" stroke="#b0b0b0" stroke-width="0.8"/></svg>
<div class="t" style="left:686px;top:193px;font-size:5.8px;color:#b8b8b8;transform:scaleX(0.991);transform-origin:left center;">Kind</div>
<svg class="a" style="left:704px;top:191px" width="8" height="8" viewBox="0 0 8 8"><path d="M1 2H7M1 4H7M1 6H7" stroke="#8e8e8e" stroke-width="0.8"/></svg>
<svg class="a" style="left:719px;top:191px" width="8" height="8" viewBox="0 0 8 8"><rect x="1" y="2" width="6" height="4.5" fill="#8e8e8e"/></svg>
<svg class="a" style="left:733px;top:191px" width="8" height="8" viewBox="0 0 8 8"><circle cx="4" cy="4" r="2.8" fill="none" stroke="#8e8e8e" stroke-width="0.9"/><path d="M4 1.2A2.8 2.8 0 0 1 4 6.8Z" fill="#8e8e8e"/></svg>
<svg class="a" style="left:746px;top:191px" width="8" height="8" viewBox="0 0 8 8"><path d="M1.5 1.5H6.5M4 1.5V7" stroke="#8e8e8e" stroke-width="1.1"/></svg>
<svg class="a" style="left:759px;top:191px" width="8" height="8" viewBox="0 0 8 8"><path d="M1.5 1V7M1.5 1H3M1.5 7H3M6.5 1V7M6.5 1H5M6.5 7H5" stroke="#8e8e8e" stroke-width="0.9" fill="none"/></svg>
<svg class="a" style="left:773px;top:191px" width="8" height="8" viewBox="0 0 8 8"><rect x="1.5" y="3.5" width="5" height="3.5" fill="#8e8e8e"/><path d="M2.5 3.5V2.2A1.5 1.5 0 0 1 5.5 2.2V3.5" stroke="#8e8e8e" stroke-width="0.8" fill="none"/></svg>
<div class="a" style="left:787px;top:190.5px;width:4px;height:9px;background:#606060"></div>
<div class="a" style="left:674px;top:202.5px;width:121px;height:1px;background:#474747"></div>
<div class="a" style="left:676px;top:205.5px;width:61px;height:10.5px;background:#585858;border:1px solid #474747"></div>
<div class="t" style="left:680px;top:209px;font-size:5.8px;color:#a8a8a8;transform:scaleX(0.963);transform-origin:left center;">Normal</div>
<svg class="a" style="left:730px;top:207px" width="8" height="8" viewBox="0 0 8 8"><path d="M2 3 L4 1 L6 3ZM2 5 L4 7 L6 5Z" fill="#b0b0b0"/></svg>
<div class="a" style="left:739px;top:205.5px;width:27px;height:10.5px;background:#575757;border:1px solid #4a4a4a"></div>
<div class="t" style="left:741.5px;top:209px;font-size:5.8px;color:#a8a8a8;transform:scaleX(1.035);transform-origin:left center;">Opacity:</div>
<div class="a" style="left:766.3px;top:205.5px;width:18.5px;height:10px;background:#464646;border:1px solid #3c3c3c"></div>
<div class="a" style="left:785px;top:205.5px;width:7px;height:10px;background:#5a5a5a"></div>
<svg class="a" style="left:785px;top:207px" width="7" height="8" viewBox="0 0 7 8"><path d="M1 4H6" stroke="#aaa" stroke-width="1"/></svg>
<div class="t" style="left:677px;top:224px;font-size:5.8px;color:#a8a8a8;transform:scaleX(0.938);transform-origin:left center;">Lock:</div>
<svg class="a" style="left:694px;top:222px" width="8" height="8" viewBox="0 0 8 8"><rect x="1" y="1" width="6" height="6" fill="none" stroke="#8e8e8e" stroke-width="0.8"/><path d="M1 4H7M4 1V7" stroke="#8e8e8e" stroke-width="0.7"/></svg>
<svg class="a" style="left:706px;top:222px" width="8" height="8" viewBox="0 0 8 8"><path d="M1 7L7 1" stroke="#8e8e8e" stroke-width="1"/></svg>
<svg class="a" style="left:718px;top:222px" width="8" height="8" viewBox="0 0 8 8"><path d="M4 1V7M1 4H7" stroke="#8e8e8e" stroke-width="0.9"/></svg>
<svg class="a" style="left:730px;top:222px" width="8" height="8" viewBox="0 0 8 8"><rect x="1.5" y="3.5" width="5" height="3.5" fill="#8e8e8e"/><path d="M2.5 3.5V2.2A1.5 1.5 0 0 1 5.5 2.2V3.5" stroke="#8e8e8e" stroke-width="0.8" fill="none"/></svg>
<div class="t" style="left:752.5px;top:224px;font-size:5.8px;color:#a8a8a8;transform:scaleX(0.887);transform-origin:left center;">Fill:</div>
<div class="a" style="left:766.3px;top:221px;width:18.5px;height:10px;background:#464646;border:1px solid #3c3c3c"></div>
<div class="a" style="left:785px;top:221px;width:7px;height:10px;background:#5a5a5a"></div>
<div class="a" style="left:677.5px;top:232px;width:113px;height:233.5px;background:#454545;border:1px solid #3e3e3e;box-shadow:inset 1px 1px 0 #4e4e4e"></div>
<div class="a" style="left:790.5px;top:232px;width:1px;height:233px;background:#343434"></div>
<div class="a" style="left:791.5px;top:232px;width:4.5px;height:233px;background:#454545"></div>
<div class="a" style="left:674px;top:466px;width:121px;height:12px;background:#525252"></div>
<svg class="a" style="left:684px;top:468.5px" width="8" height="8" viewBox="0 0 8 8"><path d="M1 4 H3 M5 4 H7 M2 2.5 Q0.5 4 2 5.5 M6 2.5 Q7.5 4 6 5.5" stroke="#8c8c8c" stroke-width="0.9" fill="none"/></svg>
<svg class="a" style="left:700px;top:468.5px" width="8" height="8" viewBox="0 0 8 8"><path d="M2 7 Q3 2 5 1.5 M1.5 4 H4.5 M4.5 4 L7 7 M7 4 L4.5 7" stroke="#8c8c8c" stroke-width="0.9" fill="none"/></svg>
<svg class="a" style="left:716px;top:468.5px" width="8" height="8" viewBox="0 0 8 8"><rect x="1" y="1.5" width="6" height="5" fill="#8c8c8c"/><circle cx="4" cy="4" r="1.5" fill="#505050"/></svg>
<svg class="a" style="left:731px;top:468.5px" width="8" height="8" viewBox="0 0 8 8"><circle cx="4" cy="4" r="2.8" fill="none" stroke="#8c8c8c" stroke-width="0.9"/><path d="M4 1.2 A2.8 2.8 0 0 1 4 6.8Z" fill="#8c8c8c"/></svg>
<svg class="a" style="left:747px;top:468.5px" width="8" height="8" viewBox="0 0 8 8"><path d="M1 2 H3.5 L4.5 3 H7 V6.5 H1Z" fill="#8c8c8c"/></svg>
<svg class="a" style="left:763px;top:468.5px" width="8" height="8" viewBox="0 0 8 8"><rect x="1.5" y="1.5" width="5" height="5.5" fill="#8c8c8c"/><path d="M4.5 1.5 L6.5 3.5" stroke="#505050"/></svg>
<svg class="a" style="left:778px;top:468.5px" width="8" height="8" viewBox="0 0 8 8"><path d="M1.5 2 H6.5 M2 3 H6 L5.5 7 H2.5Z M3 1 H5" stroke="#8c8c8c" stroke-width="0.8" fill="#8c8c8c"/></svg>
<!-- TOOLBAR -->
<div class="a" style="left:0px;top:44px;width:18px;height:1px;background:#444"></div>
<div class="a" style="left:0px;top:123.5px;width:18px;height:13.5px;background:#3a3a3a;border-top:1px solid #333;border-bottom:1px solid #626262"></div>
<svg class="a" style="left:3px;top:51.0px" width="12" height="10" viewBox="0 0 12 10"><path d="M2 1 L2 9 L4 7 L6 9.5 L7 9 L5 6.5 L8 6.5Z" fill="#c4c4c4"/><path d="M8 8h3" stroke="#c4c4c4" stroke-width="1"/></svg>
<svg class="a" style="left:14.5px;top:58.5px" width="2.5" height="2.5" viewBox="0 0 3 3"><path d="M3 0V3H0Z" fill="#bdbdbd"/></svg>
<svg class="a" style="left:3px;top:66.0px" width="12" height="10" viewBox="0 0 12 10"><rect x="2" y="2" width="9" height="6" fill="none" stroke="#c4c4c4" stroke-width="1" stroke-dasharray="1.5 1"/></svg>
<svg class="a" style="left:14.5px;top:73.5px" width="2.5" height="2.5" viewBox="0 0 3 3"><path d="M3 0V3H0Z" fill="#bdbdbd"/></svg>
<svg class="a" style="left:3px;top:81.5px" width="12" height="10" viewBox="0 0 12 10"><ellipse cx="6.5" cy="5" rx="4" ry="2.8" fill="none" stroke="#c4c4c4" stroke-width="1.2"/><path d="M3.5 7 L3 9.5" stroke="#c4c4c4" stroke-width="1"/></svg>
<svg class="a" style="left:14.5px;top:89.0px" width="2.5" height="2.5" viewBox="0 0 3 3"><path d="M3 0V3H0Z" fill="#bdbdbd"/></svg>
<svg class="a" style="left:3px;top:96.0px" width="12" height="10" viewBox="0 0 12 10"><path d="M2 9 L8 3" stroke="#c4c4c4" stroke-width="1.6"/><circle cx="9" cy="2.5" r="1.5" fill="none" stroke="#c4c4c4" stroke-width="0.8"/></svg>
<svg class="a" style="left:14.5px;top:103.5px" width="2.5" height="2.5" viewBox="0 0 3 3"><path d="M3 0V3H0Z" fill="#bdbdbd"/></svg>
<svg class="a" style="left:3px;top:111.0px" width="12" height="10" viewBox="0 0 12 10"><path d="M3 1 V8 H11 M1 3 H9 V10" fill="none" stroke="#c4c4c4" stroke-width="1.3"/></svg>
<svg class="a" style="left:14.5px;top:118.5px" width="2.5" height="2.5" viewBox="0 0 3 3"><path d="M3 0V3H0Z" fill="#bdbdbd"/></svg>
<svg class="a" style="left:3px;top:125.0px" width="12" height="10" viewBox="0 0 12 10"><path d="M2 9 L8 3" stroke="#c4c4c4" stroke-width="1.8"/><path d="M7 2 L9 1 L11 3 L10 5Z" fill="#c4c4c4"/></svg>
<svg class="a" style="left:14.5px;top:132.5px" width="2.5" height="2.5" viewBox="0 0 3 3"><path d="M3 0V3H0Z" fill="#bdbdbd"/></svg>
<svg class="a" style="left:3px;top:142.0px" width="12" height="10" viewBox="0 0 12 10"><rect x="3" y="2.5" width="7" height="4" rx="2" transform="rotate(-40 6.5 4.5)" fill="#c4c4c4"/><path d="M2 9 L5 6" stroke="#c4c4c4" stroke-width="1.2"/></svg>
<svg class="a" style="left:14.5px;top:149.5px" width="2.5" height="2.5" viewBox="0 0 3 3"><path d="M3 0V3H0Z" fill="#bdbdbd"/></svg>
<svg class="a" style="left:3px;top:157.0px" width="12" height="10" viewBox="0 0 12 10"><path d="M2 9.5 Q3 6 5 6 L10 1 L11 2 L6 7 Q6 9 2 9.5Z" fill="#c4c4c4"/></svg>
<svg class="a" style="left:14.5px;top:164.5px" width="2.5" height="2.5" viewBox="0 0 3 3"><path d="M3 0V3H0Z" fill="#bdbdbd"/></svg>
<svg class="a" style="left:3px;top:171.0px" width="12" height="10" viewBox="0 0 12 10"><rect x="5" y="1" width="3" height="4" rx="1.2" fill="#c4c4c4"/><rect x="2" y="5" width="9" height="2" fill="#c4c4c4"/><rect x="3" y="8" width="7" height="1.5" fill="#c4c4c4"/></svg>
<svg class="a" style="left:14.5px;top:178.5px" width="2.5" height="2.5" viewBox="0 0 3 3"><path d="M3 0V3H0Z" fill="#bdbdbd"/></svg>
<svg class="a" style="left:3px;top:185.0px" width="12" height="10" viewBox="0 0 12 10"><path d="M2 9.5 Q3 6 5 6 L10 1 L11 2 L6 7 Q6 9 2 9.5Z" fill="#c4c4c4"/><path d="M1 4 Q2 1 5 1" stroke="#c4c4c4" fill="none" stroke-width="0.8"/></svg>
<svg class="a" style="left:14.5px;top:192.5px" width="2.5" height="2.5" viewBox="0 0 3 3"><path d="M3 0V3H0Z" fill="#bdbdbd"/></svg>
<svg class="a" style="left:3px;top:199.0px" width="12" height="10" viewBox="0 0 12 10"><path d="M2 7 L7 2 L11 4 L6 9Z" fill="#c4c4c4"/><path d="M1 9.5 H10" stroke="#c4c4c4" stroke-width="1"/></svg>
<svg class="a" style="left:14.5px;top:206.5px" width="2.5" height="2.5" viewBox="0 0 3 3"><path d="M3 0V3H0Z" fill="#bdbdbd"/></svg>
<svg class="a" style="left:3px;top:214.0px" width="12" height="10" viewBox="0 0 12 10"><rect x="2" y="2" width="9" height="7" fill="url(#gg)" stroke="#c4c4c4" stroke-width="0.8"/><defs><linearGradient id="gg"><stop offset="0" stop-color="#fff"/><stop offset="1" stop-color="#555"/></linearGradient></defs></svg>
<svg class="a" style="left:14.5px;top:221.5px" width="2.5" height="2.5" viewBox="0 0 3 3"><path d="M3 0V3H0Z" fill="#bdbdbd"/></svg>
<svg class="a" style="left:3px;top:229.0px" width="12" height="10" viewBox="0 0 12 10"><path d="M6 1 Q9 5 9 7 A3 3 0 0 1 3 7 Q3 5 6 1Z" fill="#c4c4c4"/></svg>
<svg class="a" style="left:14.5px;top:236.5px" width="2.5" height="2.5" viewBox="0 0 3 3"><path d="M3 0V3H0Z" fill="#bdbdbd"/></svg>
<svg class="a" style="left:3px;top:243.0px" width="12" height="10" viewBox="0 0 12 10"><circle cx="5" cy="4.5" r="3" fill="#c4c4c4"/><path d="M7 6.5 L10 9.5" stroke="#c4c4c4" stroke-width="1.5"/></svg>
<svg class="a" style="left:14.5px;top:250.5px" width="2.5" height="2.5" viewBox="0 0 3 3"><path d="M3 0V3H0Z" fill="#bdbdbd"/></svg>
<svg class="a" style="left:3px;top:259.0px" width="12" height="10" viewBox="0 0 12 10"><path d="M6 1 L10 6 L7 9 L5 9 L2 6Z" fill="#c4c4c4"/><circle cx="6" cy="6" r="1" fill="#555"/></svg>
<svg class="a" style="left:14.5px;top:266.5px" width="2.5" height="2.5" viewBox="0 0 3 3"><path d="M3 0V3H0Z" fill="#bdbdbd"/></svg>
<svg class="a" style="left:3px;top:273.0px" width="12" height="10" viewBox="0 0 12 10"><path d="M2 2 H10 M6 2 V9.5" stroke="#c4c4c4" stroke-width="1.5"/></svg>
<svg class="a" style="left:14.5px;top:280.5px" width="2.5" height="2.5" viewBox="0 0 3 3"><path d="M3 0V3H0Z" fill="#bdbdbd"/></svg>
<svg class="a" style="left:3px;top:287.0px" width="12" height="10" viewBox="0 0 12 10"><path d="M3 1 L3 9 L5 7 L7 9.5 L8 9 L6 6.5 L9 6.5Z" fill="#c4c4c4"/></svg>
<svg class="a" style="left:14.5px;top:294.5px" width="2.5" height="2.5" viewBox="0 0 3 3"><path d="M3 0V3H0Z" fill="#bdbdbd"/></svg>
<svg class="a" style="left:3px;top:302.0px" width="12" height="10" viewBox="0 0 12 10"><rect x="2" y="2" width="9" height="6.5" fill="#9a9a9a" stroke="#c4c4c4" stroke-width="1"/></svg>
<svg class="a" style="left:14.5px;top:309.5px" width="2.5" height="2.5" viewBox="0 0 3 3"><path d="M3 0V3H0Z" fill="#bdbdbd"/></svg>
<svg class="a" style="left:3px;top:318.0px" width="12" height="10" viewBox="0 0 12 10"><path d="M3 5 V2.5 M5 4.5 V1.5 M7 4.5 V1.5 M9 5 V2.5" stroke="#c4c4c4" stroke-width="1.3"/><path d="M2 5 L1.5 6 L4 9.5 H9 L10 5Z" fill="#c4c4c4"/></svg>
<svg class="a" style="left:3px;top:332.0px" width="12" height="10" viewBox="0 0 12 10"><circle cx="5" cy="4.5" r="3" fill="none" stroke="#c4c4c4" stroke-width="1.3"/><path d="M7 6.5 L10 9.5" stroke="#c4c4c4" stroke-width="1.6"/></svg>
<svg class="a" style="left:1px;top:345px" width="17" height="7" viewBox="0 0 17 7"><rect x="1" y="1" width="3" height="3" fill="#111" stroke="#ddd" stroke-width="0.8"/><path d="M11 2 H15 V5" stroke="#c4c4c4" fill="none" stroke-width="0.9"/></svg>
<div class="a" style="left:2px;top:355.5px;width:9px;height:9px;background:#000;border:1px solid #cfcfcf"></div>
<div class="a" style="left:6.5px;top:360.5px;width:9.5px;height:10.5px;background:#fff;border:1px solid #8a8a8a"></div>
<div class="a" style="left:2px;top:355.5px;width:9px;height:9px;background:#000;border:1px solid #cfcfcf"></div>
<div class="a" style="left:3.5px;top:376.5px;width:11px;height:8px;border:1px solid #979797"></div>
<div class="a" style="left:7px;top:379px;width:4px;height:3px;border:1px solid #7a7a7a;border-radius:50%"></div>
<svg class="a" style="left:3px;top:388.0px" width="12" height="10" viewBox="0 0 12 10"><rect x="1" y="3" width="7" height="6" fill="none" stroke="#c4c4c4" stroke-width="0.9"/><rect x="4" y="1" width="7" height="6" fill="#666" stroke="#c4c4c4" stroke-width="0.9"/></svg>
<svg class="a" style="left:14.5px;top:395.5px" width="2.5" height="2.5" viewBox="0 0 3 3"><path d="M3 0V3H0Z" fill="#bdbdbd"/></svg>
<div class="t" style="left:23.6px;top:6px;font-size:7.2px;color:#e2e2e2;transform:scaleX(0.897);transform-origin:left center;">File</div>
<div class="t" style="left:43px;top:6px;font-size:7.2px;color:#e2e2e2;transform:scaleX(0.936);transform-origin:left center;">Edit</div>
<div class="t" style="left:63.4px;top:6px;font-size:7.2px;color:#e2e2e2;transform:scaleX(0.931);transform-origin:left center;">Image</div>
<div class="t" style="left:91.4px;top:6px;font-size:7.2px;color:#e2e2e2;transform:scaleX(0.867);transform-origin:left center;">Layer</div>
<div class="t" style="left:117px;top:6px;font-size:7.2px;color:#e2e2e2;transform:scaleX(0.898);transform-origin:left center;">Type</div>
<div class="t" style="left:140.3px;top:6px;font-size:7.2px;color:#e2e2e2;transform:scaleX(0.936);transform-origin:left center;">Select</div>
<div class="t" style="left:167.5px;top:6px;font-size:7.2px;color:#e2e2e2;transform:scaleX(0.938);transform-origin:left center;">Filter</div>
<div class="t" style="left:192px;top:6px;font-size:7.2px;color:#e2e2e2;transform:scaleX(0.906);transform-origin:left center;">View</div>
<div class="t" style="left:216px;top:6px;font-size:7.2px;color:#e2e2e2;transform:scaleX(0.927);transform-origin:left center;">Window</div>
<div class="t" style="left:250px;top:6px;font-size:7.2px;color:#e2e2e2;transform:scaleX(0.919);transform-origin:left center;">Help</div>
<div class="t" style="left:37.5px;top:23px;font-size:6.2px;color:#ececec;font-weight:boldtransform:scaleX(0.799);transform-origin:left center;">Sample Size:</div>
<div class="t" style="left:77px;top:23px;font-size:6.2px;color:#f0f0f0;font-weight:boldtransform:scaleX(0.765);transform-origin:left center;">Point Sample</div>
<div class="t" style="left:145px;top:23px;font-size:6.2px;color:#ececec;font-weight:boldtransform:scaleX(0.872);transform-origin:left center;">Sample:</div>
<div class="t" style="left:175px;top:23px;font-size:6.2px;color:#f0f0f0;font-weight:boldtransform:scaleX(0.778);transform-origin:left center;">All Layers</div>
<div class="t" style="left:293.5px;top:23px;font-size:6.2px;color:#8e8e8e;transform:scaleX(0.871);transform-origin:left center;">Show Sampling Ring</div>
<div class="t" style="left:731px;top:24px;font-size:5.8px;color:#9c9c9c;transform:scaleX(0.946);transform-origin:left center;">Essentials</div>
<div class="t" style="left:24px;top:471px;font-size:5.8px;color:#f2f2f2;font-weight:boldtransform:scaleX(0.982);transform-origin:left center;">Mini Bridge</div>
<div class="t" style="left:64px;top:471px;font-size:5.8px;color:#9a9a9a;transform:scaleX(1.014);transform-origin:left center;">Timeline</div>
<svg class="a" style="left:9px;top:20.5px" width="12" height="11" viewBox="0 0 12 11"><path d="M1 10 L6.5 4.5" stroke="#b4b4b4" stroke-width="1"/><path d="M6.5 3.5 L9 1 L11 3 L8.5 5.5Z" fill="#d8d8d8"/><path d="M6 3 L9 6" stroke="#cfcfcf" stroke-width="0.9"/></svg>
</body></html>
